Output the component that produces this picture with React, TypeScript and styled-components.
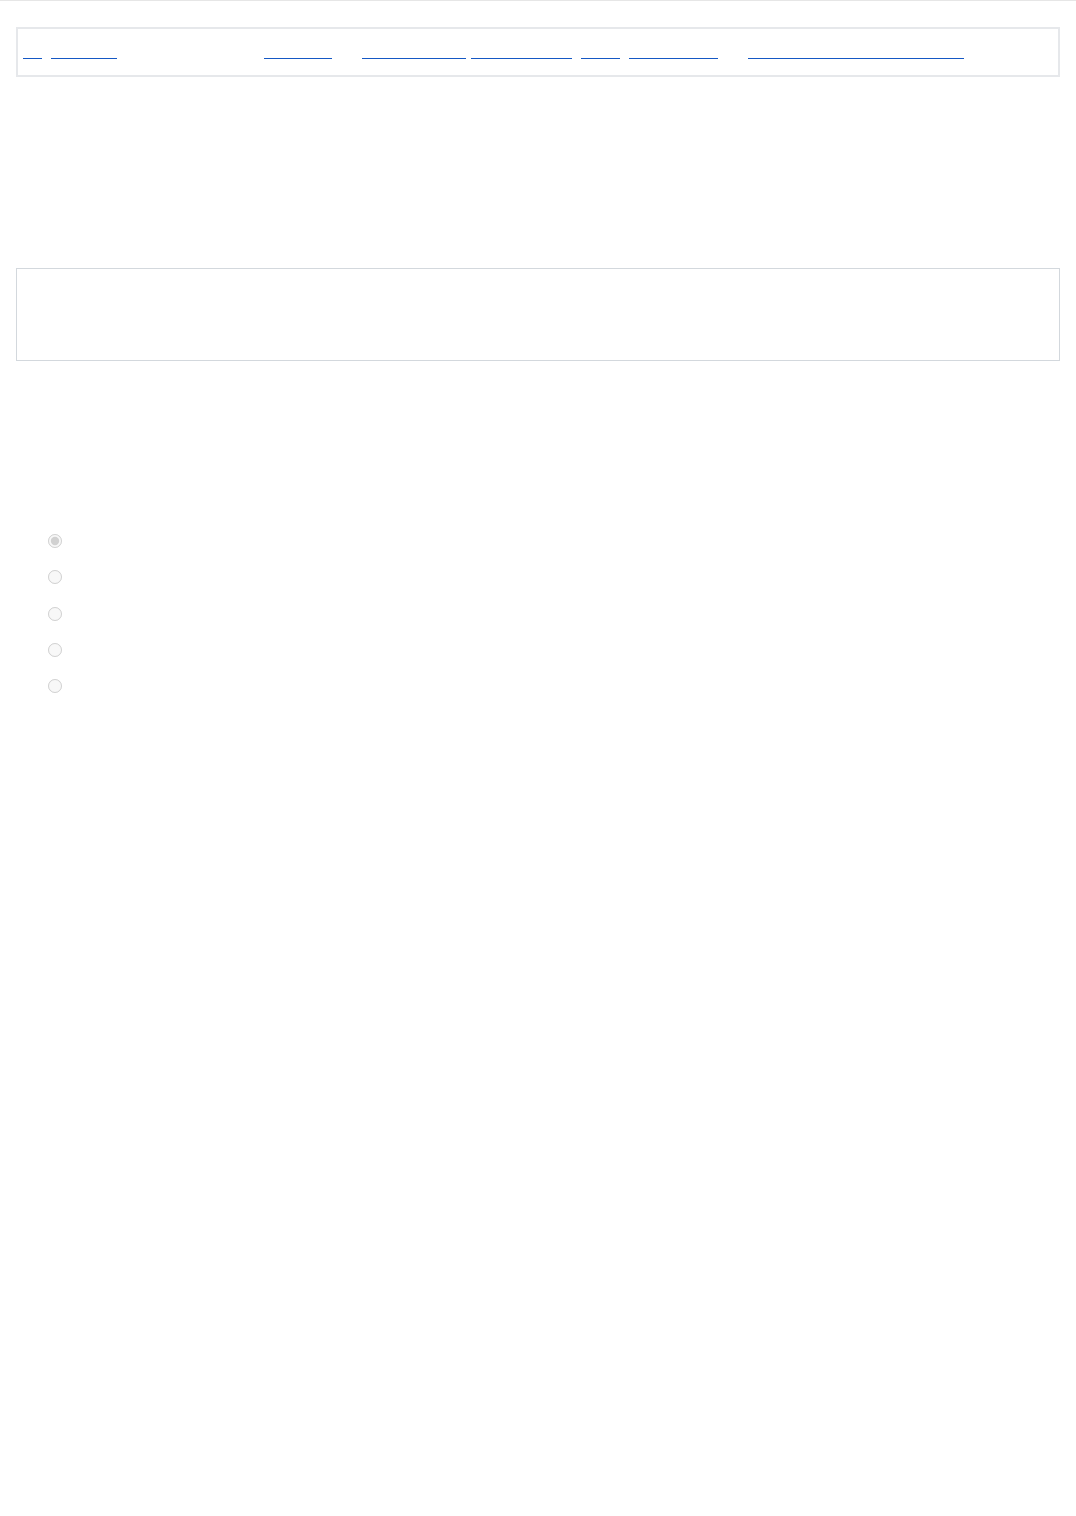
import React from "react";
import styled, { createGlobalStyle } from "styled-components";

const Global = createGlobalStyle`
  html, body { margin: 0; padding: 0; background: #ffffff; }
  body { font-family: "Liberation Sans", Arial, sans-serif; font-size: 14px; color: #ffffff; }
  * { box-sizing: border-box; }
`;

const TopRule = styled.div`
  border-top: 1px solid #e6e6e6;
  width: 100%;
`;

const Main = styled.main`
  padding: 0 16px;
`;

const NavBox = styled.nav`
  margin-top: 26px;
  border: 2px solid #e6e8eb;
  height: 50px;
  display: flex;
  align-items: flex-start;
  padding: 13px 5px 0 5px;
`;

const NavLink = styled.a<{ $w: number }>`
  display: inline-block;
  flex: 0 0 auto;
  width: ${(p) => p.$w}px;
  height: 17px;
  line-height: 16px;
  font-size: 14px;
  color: #ffffff;
  text-decoration: none;
  border-bottom: 1px solid #1558c4;
  white-space: nowrap;
  overflow: hidden;
  cursor: pointer;
`;

const NavText = styled.span<{ $w: number }>`
  display: inline-block;
  flex: 0 0 auto;
  width: ${(p) => p.$w}px;
  height: 16px;
  line-height: 16px;
  font-size: 14px;
  color: #ffffff;
  white-space: nowrap;
  overflow: hidden;
`;

const Panel = styled.section`
  margin-top: 191px;
  height: 93px;
  border: 1px solid #d3d8dd;
  color: #ffffff;
  padding: 16px;
`;

const RadioList = styled.div`
  margin-top: 173px;
  padding-left: 31.5px;
  display: flex;
  flex-direction: column;
`;

const RadioRow = styled.label`
  display: flex;
  align-items: flex-start;
  height: 36.25px;
  color: #ffffff;
  font-size: 14px;
`;

const Radio = styled.input`
  margin: 0 10px 0 0;
  width: 14px;
  height: 14px;
`;

type Item = { kind: "link" | "text"; w: number; label: string };

const items: Item[] = [
  { kind: "link", w: 19, label: "Hi" },
  { kind: "text", w: 9, label: "|" },
  { kind: "link", w: 66, label: "Sign out" },
  { kind: "text", w: 147, label: "Welcome back" },
  { kind: "link", w: 68, label: "Account" },
  { kind: "text", w: 30, label: "|" },
  { kind: "link", w: 104, label: "Preferences" },
  { kind: "text", w: 5, label: "" },
  { kind: "link", w: 101, label: "Notifications" },
  { kind: "text", w: 9, label: "|" },
  { kind: "link", w: 39, label: "Help" },
  { kind: "text", w: 9, label: "|" },
  { kind: "link", w: 89, label: "Contact us" },
  { kind: "text", w: 30, label: "|" },
  { kind: "link", w: 216, label: "Privacy and terms of service" },
];

const options = ["Option one", "Option two", "Option three", "Option four", "Option five"];

export default function App() {
  return (
    <>
      <Global />
      <TopRule />
      <Main>
        <NavBox>
          {items.map((it, i) =>
            it.kind === "link" ? (
              <NavLink key={i} $w={it.w} href="#">
                {it.label}
              </NavLink>
            ) : (
              <NavText key={i} $w={it.w}>
                {it.label}
              </NavText>
            )
          )}
        </NavBox>
        <Panel>Content</Panel>
        <RadioList>
          {options.map((o, i) => (
            <RadioRow key={o}>
              <Radio type="radio" name="choice" disabled defaultChecked={i === 0} />
              {o}
            </RadioRow>
          ))}
        </RadioList>
      </Main>
    </>
  );
}
